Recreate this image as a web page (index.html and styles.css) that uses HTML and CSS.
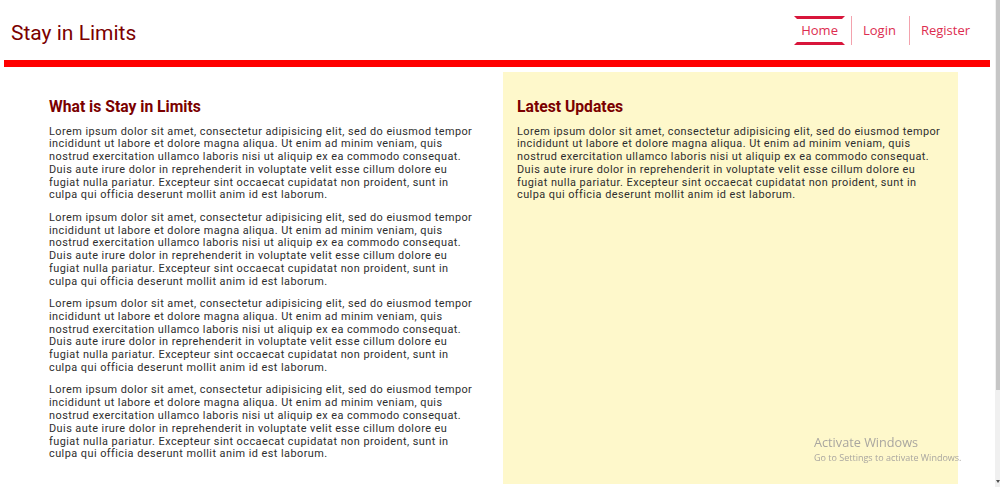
FILE: index.html
```html
<!DOCTYPE html>
<html lang="en">
<head>
<meta charset="utf-8">
<title>Stay in Limits</title>
<link rel="stylesheet" href="styles.css">
</head>
<body>
<header class="header">
  <h1 class="brand">Stay in Limits</h1>
  <nav>
    <ul class="nav">
      <li class="nav-item"><a class="nav-link active" href="#">Home</a></li>
      <li class="nav-item"><a class="nav-link" href="#">Login</a></li>
      <li class="nav-item"><a class="nav-link" href="#">Register</a></li>
    </ul>
  </nav>
</header>
<main class="main">
  <section class="col col-left">
    <h2 class="title">What is Stay in Limits</h2>
    <p class="text">Lorem ipsum dolor sit amet, consectetur adipisicing elit, sed do eiusmod tempor<br>incididunt ut labore et dolore magna aliqua. Ut enim ad minim veniam, quis<br>nostrud exercitation ullamco laboris nisi ut aliquip ex ea commodo consequat.<br>Duis aute irure dolor in reprehenderit in voluptate velit esse cillum dolore eu<br>fugiat nulla pariatur. Excepteur sint occaecat cupidatat non proident, sunt in<br>culpa qui officia deserunt mollit anim id est laborum.</p>
    <p class="text">Lorem ipsum dolor sit amet, consectetur adipisicing elit, sed do eiusmod tempor<br>incididunt ut labore et dolore magna aliqua. Ut enim ad minim veniam, quis<br>nostrud exercitation ullamco laboris nisi ut aliquip ex ea commodo consequat.<br>Duis aute irure dolor in reprehenderit in voluptate velit esse cillum dolore eu<br>fugiat nulla pariatur. Excepteur sint occaecat cupidatat non proident, sunt in<br>culpa qui officia deserunt mollit anim id est laborum.</p>
    <p class="text">Lorem ipsum dolor sit amet, consectetur adipisicing elit, sed do eiusmod tempor<br>incididunt ut labore et dolore magna aliqua. Ut enim ad minim veniam, quis<br>nostrud exercitation ullamco laboris nisi ut aliquip ex ea commodo consequat.<br>Duis aute irure dolor in reprehenderit in voluptate velit esse cillum dolore eu<br>fugiat nulla pariatur. Excepteur sint occaecat cupidatat non proident, sunt in<br>culpa qui officia deserunt mollit anim id est laborum.</p>
    <p class="text">Lorem ipsum dolor sit amet, consectetur adipisicing elit, sed do eiusmod tempor<br>incididunt ut labore et dolore magna aliqua. Ut enim ad minim veniam, quis<br>nostrud exercitation ullamco laboris nisi ut aliquip ex ea commodo consequat.<br>Duis aute irure dolor in reprehenderit in voluptate velit esse cillum dolore eu<br>fugiat nulla pariatur. Excepteur sint occaecat cupidatat non proident, sunt in<br>culpa qui officia deserunt mollit anim id est laborum.</p>
  </section>
  <aside class="col col-right">
    <h2 class="title">Latest Updates</h2>
    <p class="text">Lorem ipsum dolor sit amet, consectetur adipisicing elit, sed do eiusmod tempor<br>incididunt ut labore et dolore magna aliqua. Ut enim ad minim veniam, quis<br>nostrud exercitation ullamco laboris nisi ut aliquip ex ea commodo consequat.<br>Duis aute irure dolor in reprehenderit in voluptate velit esse cillum dolore eu<br>fugiat nulla pariatur. Excepteur sint occaecat cupidatat non proident, sunt in<br>culpa qui officia deserunt mollit anim id est laborum.</p>
  </aside>
</main>
<div class="watermark">
  <div class="wm-title">Activate Windows</div>
  <div class="wm-sub">Go to Settings to activate Windows.</div>
</div>
<div class="scrollbar"><div class="scroll-thumb"></div><div class="scroll-arrow"></div></div>
</body>
</html>
```
FILE: styles.css
```css
* { box-sizing: border-box; }

html, body {
  margin: 0;
  padding: 0;
  background: #ffffff;
}

body {
  font-family: "Open Sans", "Noto Sans", sans-serif;
  color: #2e2e2e;
  overflow: hidden;
}

.header {
  display: flex;
  align-items: center;
  justify-content: space-between;
  height: 67px;
  margin: 0 10px 0 4px;
  padding: 0 13px 0 7px;
  border-bottom: 7px solid #ff0000;
}

.brand {
  margin: 0;
  font-family: Roboto, "Liberation Sans", sans-serif;
  font-weight: 400;
  font-size: 21px;
  color: #7b0000;
  padding-top: 6px;
}

.nav {
  list-style: none;
  margin: 0;
  padding: 0;
  display: flex;
  align-items: stretch;
}

.nav-item {
  display: flex;
}

.nav-item + .nav-item {
  margin-left: 6px;
  padding-left: 4px;
  border-left: 1px solid #f3a2ad;
}

.nav-link {
  display: block;
  padding: 4px 4px;
  border: 3px solid transparent;
  font-size: 13px;
  line-height: 15px;
  color: #dd2d50;
  text-decoration: none;
}

.nav-link.active {
  border-top-color: #d8163b;
  border-bottom-color: #d8163b;
}

.main {
  display: grid;
  grid-template-columns: 499px 455px;
  margin: 5px 0 0 4px;
}

.col {
  padding-top: 25px;
}

.col-left {
  padding-left: 45px;
  padding-bottom: 23px;
}

.col-right {
  background: #fef8cb;
  padding-left: 14px;
  padding-right: 14px;
}

.title {
  margin: 0 0 9.5px;
  font-family: Roboto, "Liberation Sans", sans-serif;
  font-weight: 700;
  font-size: 15.7px;
  line-height: 19px;
  color: #7a0000;
}

.text {
  margin: 0 0 9.5px;
  font-family: Roboto, "Open Sans", sans-serif;
  font-size: 10.9px;
  letter-spacing: 0.45px;
  line-height: 12.8px;
  white-space: nowrap;
  color: #2e2e2e;
}

.text:last-child {
  margin-bottom: 0;
}

.watermark {
  position: fixed;
  left: 814px;
  top: 434px;
  color: #a9a6a0;
  font-family: "Open Sans", "Noto Sans", sans-serif;
  pointer-events: none;
}

.wm-title {
  font-size: 12.7px;
  line-height: 17px;
}

.wm-sub {
  font-size: 9px;
  line-height: 13px;
  margin-top: 0;
}

.scrollbar {
  position: fixed;
  top: 0;
  right: 0;
  width: 5px;
  height: 100%;
  background: #f0f0f0;
}

.scroll-thumb {
  margin-left: 1px;
  height: 390px;
  background: #c6c6c6;
}

.scroll-arrow {
  position: absolute;
  left: 1px;
  bottom: 4px;
  width: 0;
  height: 0;
  border-left: 2px solid transparent;
  border-right: 2px solid transparent;
  border-top: 3px solid #505050;
}
```
